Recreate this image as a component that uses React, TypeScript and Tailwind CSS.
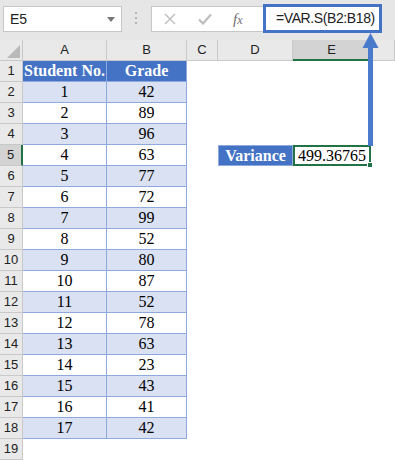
import React from 'react';

const grades = [42, 89, 96, 63, 77, 72, 99, 52, 80, 87, 52, 78, 63, 23, 43, 41, 42];
const colLetters = ['A', 'B', 'C', 'D', 'E'];

const sans = 'font-["Liberation_Sans",Arial,sans-serif]';
const serif = 'font-["Liberation_Serif","Times_New_Roman",serif]';

const HeaderCell: React.FC<{ children?: React.ReactNode; selected?: boolean }> = ({ children, selected }) => (
  <div
    className={`flex items-center justify-center border-r border-[#c9c9c9] text-[13px] text-[#222] ${sans} ${
      selected ? 'bg-[#d3d3d3] border-b-2 border-b-[#217346]' : 'bg-[#e9e9e9] border-b border-b-[#c9c9c9]'
    }`}
  >
    {children}
  </div>
);

const RowHeader: React.FC<{ n: number; selected?: boolean }> = ({ n, selected }) => (
  <div
    className={`flex items-center justify-center border-b border-[#c9c9c9] text-[13px] text-[#222] ${sans} ${
      selected ? 'bg-[#d3d3d3] border-r-2 border-r-[#217346]' : 'bg-[#e9e9e9] border-r border-r-[#c9c9c9]'
    }`}
  >
    {n}
  </div>
);

const TableCell: React.FC<{ children?: React.ReactNode; row: number }> = ({ children, row }) => {
  const head = row === 1;
  const shaded = row % 2 === 0;
  return (
    <div
      className={`flex items-center justify-center border-r border-b border-[#8ea9db] ${serif} ${
        head ? 'bg-[#4472c4] text-white font-bold text-[16px]' : shaded ? 'bg-[#d9e1f2] text-black text-[16px]' : 'bg-white text-black text-[16px]'
      }`}
    >
      {children}
    </div>
  );
};

export default function App() {
  const rows = Array.from({ length: 19 }, (_, i) => i + 1);

  return (
    <div className="relative w-[395px] h-[460px] overflow-hidden bg-white">
      {/* formula bar */}
      <div className="flex h-[40px] items-start bg-[#e6e6e6]">
        <div className={`ml-[3px] mt-[6px] flex h-[26px] w-[119px] items-center justify-between border border-[#c6c6c6] bg-white pl-[6px] pr-[6px] text-[14px] text-[#222] ${sans}`}>
          <span>E5</span>
          <svg width="8" height="5" viewBox="0 0 8 5">
            <path d="M0 0 L8 0 L4 5 Z" fill="#777" />
          </svg>
        </div>
        <div className="ml-[13px] mt-[12px] flex flex-col gap-[3px]">
          <span className="h-[2px] w-[2px] bg-[#b5b5b5]" />
          <span className="h-[2px] w-[2px] bg-[#b5b5b5]" />
          <span className="h-[2px] w-[2px] bg-[#b5b5b5]" />
        </div>
        <div className="ml-[14px] mt-[6px] flex h-[26px] w-[113px] items-center border border-[#c6c6c6] bg-white">
          <svg className="ml-[12px]" width="12" height="12" viewBox="0 0 12 12">
            <path d="M1 1 L11 11 M11 1 L1 11" stroke="#bdbdbd" strokeWidth="1.4" />
          </svg>
          <svg className="ml-[22px]" width="14" height="12" viewBox="0 0 14 12">
            <path d="M1 6.5 L5 10.5 L13 1.5" stroke="#bdbdbd" strokeWidth="2.2" fill="none" />
          </svg>
          <span className={`ml-[21px] text-[15px] italic text-[#6e6e6e] ${serif}`}>
            f<span className="text-[12px]">x</span>
          </span>
        </div>
        <div className={`-ml-[1px] mt-[4px] flex h-[29px] w-[119px] items-center border-[3px] border-[#4472c4] bg-white pl-[10px] text-[14px] tracking-[-0.4px] text-[#222] ${sans}`}>
          =VAR.S(B2:B18)
        </div>
      </div>

      {/* sheet */}
      <div className="grid grid-cols-[23px_84px_80px_31px_75px_78px_1fr] auto-rows-[21px]">
        <div className="relative border-r border-b border-[#c9c9c9] bg-[#e9e9e9]">
          <svg className="absolute right-[2px] bottom-[2px]" width="13" height="13" viewBox="0 0 13 13">
            <path d="M13 0 L13 13 L0 13 Z" fill="#b9b9b9" />
          </svg>
        </div>
        {colLetters.map(c => (
          <HeaderCell key={c} selected={c === 'E'}>
            {c}
          </HeaderCell>
        ))}
        <HeaderCell />

        {rows.map(r => (
          <React.Fragment key={r}>
            <RowHeader n={r} selected={r === 5} />
            {r <= 18 ? (
              <>
                <TableCell row={r}>{r === 1 ? 'Student No.' : r - 1}</TableCell>
                <TableCell row={r}>{r === 1 ? 'Grade' : grades[r - 2]}</TableCell>
              </>
            ) : (
              <>
                <div />
                <div />
              </>
            )}
            <div />
            {r === 5 ? (
              <>
                <div className={`flex items-center justify-center border border-[#8ea9db] bg-[#4472c4] text-[16px] font-bold text-white ${serif}`}>
                  Variance
                </div>
                <div className={`relative flex items-center justify-center border-2 border-[#217346] text-[16px] text-black ${serif}`}>
                  499.36765
                  <span className="absolute -right-[4px] -bottom-[4px] h-[6px] w-[6px] border border-white bg-[#217346]" />
                </div>
              </>
            ) : (
              <>
                <div />
                <div />
              </>
            )}
            <div />
          </React.Fragment>
        ))}
      </div>

      {/* arrow from result to formula */}
      <svg className="pointer-events-none absolute left-0 top-0" width="395" height="460" viewBox="0 0 395 460">
        <rect x="368" y="46" width="5" height="100" fill="#4a7acb" />
        <path d="M370.5 33 L378.5 48 L362.5 48 Z" fill="#4a7acb" />
      </svg>
    </div>
  );
}
